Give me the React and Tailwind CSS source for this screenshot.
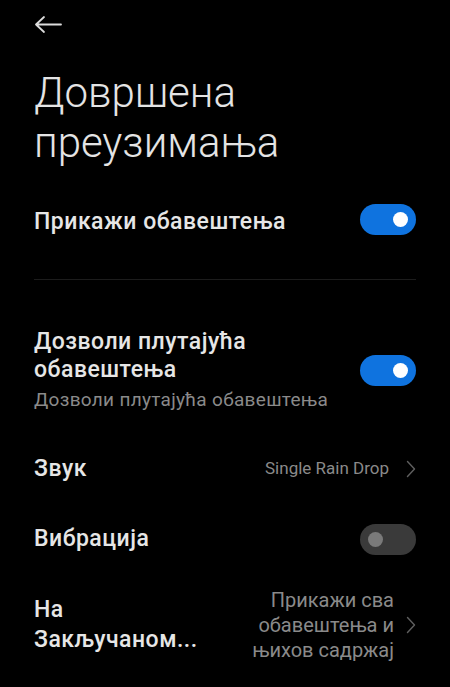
const font = { fontFamily: "Roboto, 'Noto Sans', sans-serif" };

function Toggle({ on }) {
  return (
    <div
      className={`w-[56px] h-[31px] rounded-full flex items-center shrink-0 px-[8px] ${
        on ? 'bg-[#0f73df] justify-end' : 'bg-[#3a3a3a] justify-start'
      }`}
    >
      <div className={`w-[15px] h-[15px] rounded-full ${on ? 'bg-white' : 'bg-[#7a7a7a]'}`} />
    </div>
  );
}

function Chevron() {
  return (
    <svg width="10" height="18" viewBox="0 0 10 18" className="shrink-0">
      <path d="M1.5 1.5 L8.5 9 L1.5 16.5" stroke="#5f5f5f" strokeWidth="1.4" fill="none" strokeLinecap="round" strokeLinejoin="round" />
    </svg>
  );
}

export default function App() {
  return (
    <div className="w-[450px] h-[687px] bg-black text-[#e6e6e6] overflow-hidden" style={font}>
      <div className="px-[34px]">
        {/* top bar */}
        <div className="h-[50px] flex items-center">
          <svg width="28" height="20" viewBox="0 0 28 20">
            <path d="M2 9.5 H27 M2 9.5 L10 2 M2 9.5 L10 17" stroke="#dcdcdc" strokeWidth="1.8" fill="none" strokeLinecap="round" />
          </svg>
        </div>

        <h1 className="mt-[18px] text-[42px] leading-[50px] font-light text-[#e4e4e4]">
          Довршена
          <br />
          преузимања
        </h1>

        {/* show notifications */}
        <div className="h-[102px] flex items-center justify-between">
          <span className="mt-[6px] text-[23px] font-medium tracking-[0.5px]">Прикажи обавештења</span>
          <Toggle on />
        </div>

        <div className="mt-[9px] h-px bg-[#1c1c1c]" />

        {/* floating */}
        <div className="pt-[48px] pb-[21px] flex items-center justify-between">
          <div>
            <div className="text-[23px] leading-[28px] font-medium tracking-[0.5px]">
              Дозволи плутајућа
              <br />
              обавештења
            </div>
            <div className="mt-[3px] text-[19px] leading-[26px] text-[#8a8a8a] tracking-[0.3px]">
              Дозволи плутајућа обавештења
            </div>
          </div>
          <Toggle on />
        </div>

        {/* sound */}
        <div className="h-[70px] flex items-center justify-between">
          <span className="text-[23px] font-medium tracking-[0.5px]">Звук</span>
          <div className="flex items-center gap-[17px]">
            <span className="text-[17px] text-[#8a8a8a]">Single Rain Drop</span>
            <Chevron />
          </div>
        </div>

        {/* vibration */}
        <div className="h-[70px] flex items-center justify-between">
          <span className="text-[23px] font-medium tracking-[0.5px]">Вибрација</span>
          <Toggle />
        </div>

        {/* lock screen */}
        <div className="h-[102px] flex items-center justify-between">
          <span className="text-[23px] leading-[30px] font-medium tracking-[0.5px]">
            На
            <br />
            Закључаном...
          </span>
          <div className="flex items-center gap-[12px]">
            <span className="text-[20px] leading-[25px] text-right text-[#8a8a8a]">
              Прикажи сва
              <br />
              обавештења и
              <br />
              њихов садржај
            </span>
            <Chevron />
          </div>
        </div>
      </div>
    </div>
  );
}
